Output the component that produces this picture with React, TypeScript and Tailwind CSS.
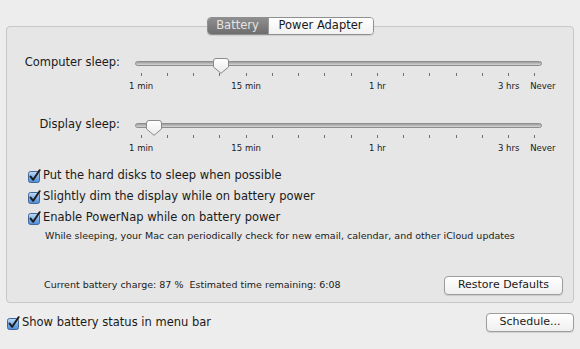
import React from "react";

const FONT = "font-['DejaVu_Sans',sans-serif]";

function Checkbox() {
  return (
    <svg width="13" height="14" viewBox="0 0 13 14" className="shrink-0">
      <defs>
        <linearGradient id="cbg" x1="0" y1="0" x2="0" y2="1">
          <stop offset="0" stopColor="#c4dcf6" />
          <stop offset="0.5" stopColor="#7fb0e8" />
          <stop offset="1" stopColor="#4d8ad6" />
        </linearGradient>
      </defs>
      <rect x="0.5" y="2.5" width="11" height="11" rx="2" fill="url(#cbg)" stroke="#41689a" />
      <path d="M2.6 7.6 L5.2 10.8 L11.6 1.2" fill="none" stroke="#1d1d1d" strokeWidth="2" strokeLinecap="round" strokeLinejoin="round" />
    </svg>
  );
}

function Knob({ left }: { left: number }) {
  return (
    <svg width="16" height="16" viewBox="0 0 16 16" className="absolute top-0" style={{ left: left - 8 }}>
      <defs>
        <linearGradient id="kg" x1="0" y1="0" x2="0" y2="1">
          <stop offset="0" stopColor="#ffffff" />
          <stop offset="1" stopColor="#e9e9e9" />
        </linearGradient>
      </defs>
      <path d="M3 0.5 H13 Q15.5 0.5 15.5 3 V9 L8 15.3 L0.5 9 V3 Q0.5 0.5 3 0.5 Z" fill="url(#kg)" stroke="#8a8a8a" />
    </svg>
  );
}

const tickLabels: Record<number, string> = { 0: "1 min", 4: "15 min", 9: "1 hr", 14: "3 hrs", 15: "Never" };

function SliderRow({ label, knob }: { label: string; knob: number }) {
  return (
    <div className="flex items-start">
      <div className="w-[113px] h-[10px] flex items-center justify-end text-[11.5px] leading-none text-[#1a1a1a]">{label}</div>
      <div className="ml-[8px] w-[420px]">
        <div className="relative h-[10px] flex items-center pl-[7px] pr-[6px]">
          <div className="h-[5px] w-full rounded-full border border-[#8d8d8d] bg-gradient-to-b from-[#9e9e9e] to-[#d6d6d6]" />
          <Knob left={knob} />
        </div>
        <div className="grid grid-cols-[repeat(16,minmax(0,1fr))] mt-[5px]">
          {Array.from({ length: 16 }).map((_, i) => (
            <div key={i} className="flex flex-col items-center">
              <div className="w-px h-[3px] bg-[#6f6f6f]" />
              <div className={`mt-[5px] h-[11px] whitespace-nowrap text-[8.5px] leading-[11px] text-[#1a1a1a] ${i === 15 ? "translate-x-[8px]" : ""}`}>
                {tickLabels[i] ?? ""}
              </div>
            </div>
          ))}
        </div>
      </div>
    </div>
  );
}

function CheckRow({ text }: { text: string }) {
  return (
    <div className="h-[21px] flex items-center gap-[2px] pl-[21px]">
      <Checkbox />
      <span className="text-[11.5px] text-[#1a1a1a]">{text}</span>
    </div>
  );
}

function MacButton({ children, w }: { children: React.ReactNode; w: string }) {
  return (
    <div className={`${w} h-[19px] flex items-center justify-center rounded-[4px] border border-[#9d9d9d] bg-gradient-to-b from-[#ffffff] to-[#efefef] shadow-[0_1px_1px_rgba(0,0,0,0.12)] text-[11px] text-[#1a1a1a]`}>
      {children}
    </div>
  );
}

export default function App() {
  return (
    <div className={`w-[580px] h-[349px] bg-[#ededed] ${FONT} pt-[17px] px-[6px] overflow-hidden`}>
      <div className="relative z-10 flex justify-center">
        <div className="flex h-[18px] rounded-[4px] border border-[#8f8f8f] overflow-hidden shadow-[0_1px_1px_rgba(0,0,0,0.1)]">
          <div className="w-[60px] flex items-center justify-center bg-gradient-to-b from-[#8e8e8e] to-[#6e6e6e] text-[11.5px] text-[#e4e4e4]">Battery</div>
          <div className="w-[105px] flex items-center justify-center bg-gradient-to-b from-[#ffffff] to-[#f1f1f1] border-l border-[#9a9a9a] text-[11.5px] text-[#1a1a1a]">Power Adapter</div>
        </div>
      </div>
      <div className="-mt-[9px] h-[277px] rounded-[4px] border border-[#c7c7c7] bg-[#e6e6e6] pt-[31px] flex flex-col">
        <SliderRow label="Computer sleep:" knob={93} />
        <div className="mt-[28px]">
          <SliderRow label="Display sleep:" knob={26} />
        </div>
        <div className="mt-[11px]">
          <CheckRow text="Put the hard disks to sleep when possible" />
          <CheckRow text="Slightly dim the display while on battery power" />
          <CheckRow text="Enable PowerNap while on battery power" />
          <div className="mt-[2px] pl-[38px] text-[9.5px] leading-[12px] text-[#1a1a1a]">
            While sleeping, your Mac can periodically check for new email, calendar, and other iCloud updates
          </div>
        </div>
        <div className="mt-[34px] flex items-center justify-between pl-[37px] pr-[10px]">
          <span className="text-[9.5px] text-[#1a1a1a] whitespace-pre">Current battery charge: 87 %  Estimated time remaining: 6:08</span>
          <MacButton w="w-[119px]">Restore Defaults</MacButton>
        </div>
      </div>
      <div className="mt-[10px] flex items-center justify-between">
        <div className="flex items-center gap-[2px] pl-[1px]">
          <Checkbox />
          <span className="text-[11.5px] text-[#1a1a1a]">Show battery status in menu bar</span>
        </div>
        <MacButton w="w-[88px]">Schedule...</MacButton>
      </div>
    </div>
  );
}
